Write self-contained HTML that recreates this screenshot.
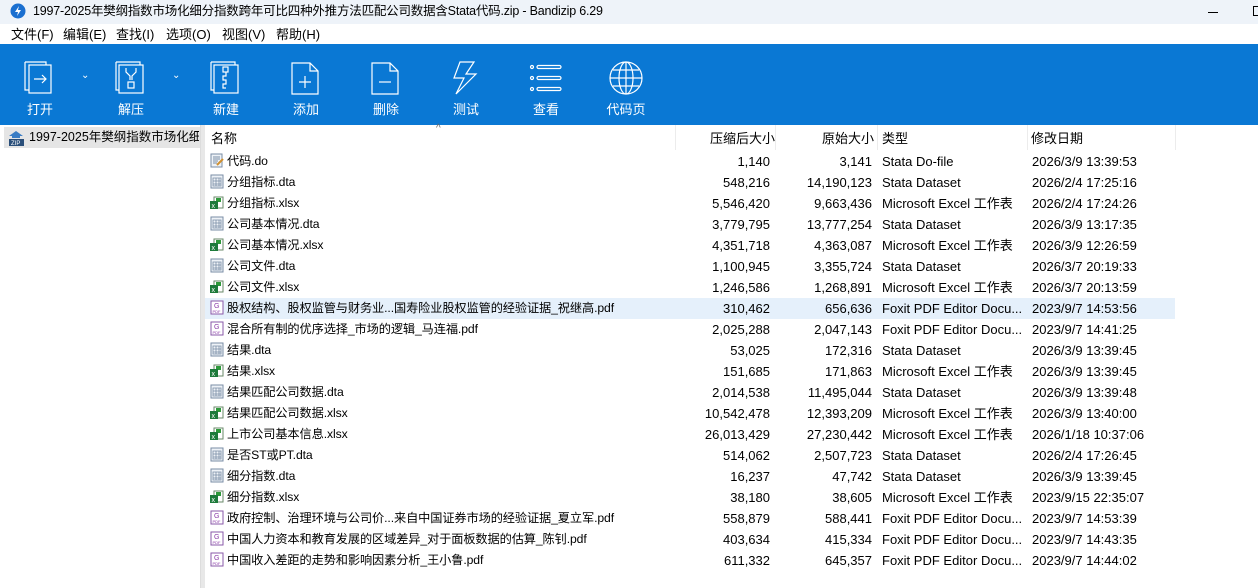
<!DOCTYPE html><html><head><meta charset="utf-8"><style>
*{margin:0;padding:0;box-sizing:border-box}
body{width:1258px;height:588px;overflow:hidden;background:#fff;font-family:"Liberation Sans","Noto Sans CJK SC",sans-serif;font-size:13px;line-height:15px;color:#000;position:relative}
.title{position:absolute;left:0;top:0;width:1258px;height:24px;background:#eef3f9;}
.title span{position:absolute;left:33px;top:4px;font-size:12.5px;letter-spacing:-0.2px}
.menu{position:absolute;top:24px;left:0;height:20px;width:1258px;background:#fff}
.menu span{position:absolute;top:3px;font-size:13px}
.tb{position:absolute;top:44px;left:0;width:1258px;height:81px;background:#0a78d4}
.btn{position:absolute;top:0;width:60px;text-align:center;color:#fff}
.btn svg{position:absolute;left:12px;top:16px}
.btn b{position:absolute;top:58px;left:0;width:60px;font-weight:normal;font-size:13px}
.left{position:absolute;left:0;top:125px;width:201px;height:463px;background:#fff;border-right:1px solid #ddd}
.split{position:absolute;left:201px;top:125px;width:4px;height:463px;background:#e8e8e8}
.hdr{position:absolute;top:125px;left:205px;width:1053px;height:25px}
.hdr span{position:absolute;top:6px}
.vd{position:absolute;top:125px;width:1px;height:25px;background:#ececec}
.row{position:absolute;left:205px;width:970px;height:21px}
.row span{position:absolute;top:4px;white-space:nowrap}
.row span.n{font-size:12.2px;letter-spacing:-0.1px}
.r{text-align:right}
.ic{position:absolute;left:5px;top:3px;width:14px;height:15px}
</style></head><body>
<div style="position:absolute;left:0;top:0;width:3px;height:44px;background:#e87a2a"></div>
<div class="title"><svg style="position:absolute;left:10px;top:3px" width="16" height="16"><circle cx="8" cy="8" r="7.5" fill="#1a6fd0"/><path d="M9 3L5 9h3l-1 4 4-6H8z" fill="#fff"/></svg><span>1997-2025年樊纲指数市场化细分指数跨年可比四种外推方法匹配公司数据含Stata代码.zip - Bandizip 6.29</span>
<div style="position:absolute;left:1208px;top:12px;width:10px;height:1px;background:#000"></div><div style="position:absolute;left:1253px;top:6px;width:10px;height:10px;border:1px solid #000"></div></div>
<div class="menu"><span style="left:11px">文件(F)</span><span style="left:63px">编辑(E)</span><span style="left:116px">查找(I)</span><span style="left:166px">选项(O)</span><span style="left:222px">视图(V)</span><span style="left:276px">帮助(H)</span></div>
<div class="tb">
<div class="btn" style="left:10px"><svg width="36" height="36" fill="none" stroke="#fff" stroke-width="1.2"><path d="M3 2h21v3M3 2v28h4"/><rect x="7" y="5" width="22" height="28"/><path d="M12 19h12M20 15l4 4-4 4"/></svg><b>打开</b></div>
<div style="position:absolute;left:81px;top:24px;color:#fff;font-size:10px">⌄</div>
<div class="btn" style="left:101px"><svg width="36" height="36" fill="none" stroke="#fff" stroke-width="1.2"><path d="M3 2h24v3"/><path d="M3 2v28h3"/><rect x="6" y="5" width="24" height="28"/><path d="M13 8v4l4 4v4M23 8v4l-4 4v4"/><rect x="15" y="22" width="6" height="6"/></svg><b>解压</b></div>
<div style="position:absolute;left:172px;top:24px;color:#fff;font-size:10px">⌄</div>
<div class="btn" style="left:196px"><svg width="36" height="36" fill="none" stroke="#fff" stroke-width="1.2"><path d="M3 2h24v3M3 2v28h3"/><rect x="6" y="5" width="24" height="28"/><rect x="15" y="7" width="5" height="5"/><path d="M18 12v4h-3v4h3v4h-3v4h3"/></svg><b>新建</b></div>
<div class="btn" style="left:276px"><svg width="36" height="36" fill="none" stroke="#fff" stroke-width="1.2"><path d="M4 3h18l8 8v23H4z M22 3v8h8"/><path d="M17 16v12M11 22h12"/></svg><b>添加</b></div>
<div class="btn" style="left:356px"><svg width="36" height="36" fill="none" stroke="#fff" stroke-width="1.2"><path d="M4 3h18l8 8v23H4z M22 3v8h8"/><path d="M11 22h12"/></svg><b>删除</b></div>
<div class="btn" style="left:436px"><svg width="36" height="36" fill="none" stroke="#fff" stroke-width="1.2"><path d="M12 2h14l-8 12h10L8 34l8-16H6z"/></svg><b>测试</b></div>
<div class="btn" style="left:516px"><svg width="36" height="36" fill="none" stroke="#fff" stroke-width="1.2"><circle cx="4" cy="7" r="1.5"/><circle cx="4" cy="18" r="1.5"/><circle cx="4" cy="29" r="1.5"/><rect x="9" y="5.5" width="24" height="3" rx="1.5"/><rect x="9" y="16.5" width="24" height="3" rx="1.5"/><rect x="9" y="27.5" width="24" height="3" rx="1.5"/></svg><b>查看</b></div>
<div class="btn" style="left:596px"><svg width="36" height="36" fill="none" stroke="#fff" stroke-width="1.2"><circle cx="18" cy="18" r="16"/><ellipse cx="18" cy="18" rx="7" ry="16"/><path d="M18 2v32M2 18h32M5 10h26M5 26h26"/></svg><b>代码页</b></div>
</div>
<div class="left"><div style="position:absolute;left:4px;top:2px;width:196px;height:21px;background:#e5e5e5"></div>
<svg style="position:absolute;left:8px;top:5px" width="16" height="16"><path d="M8 1L1 6h3v2h8V6h3z" fill="#3b7dc4"/><rect x="1" y="9" width="15" height="7" fill="#2a4f7a"/><text x="3" y="15" font-size="6" fill="#fff" font-family="Liberation Sans">ZIP</text></svg>
<span style="position:absolute;left:29px;top:5px;white-space:nowrap;width:170px;overflow:hidden;font-size:12.5px">1997-2025年樊纲指数市场化细</span></div>
<div class="split"></div>
<div class="hdr"><span style="left:6px">名称</span><span style="left:231px;top:-4px;font-size:10px;color:#666">^</span><span style="left:505px">压缩后大小</span><span style="left:617px">原始大小</span><span style="left:677px">类型</span><span style="left:826px">修改日期</span></div>
<div class="vd" style="left:675px"></div><div class="vd" style="left:775px"></div><div class="vd" style="left:877px"></div><div class="vd" style="left:1027px"></div><div class="vd" style="left:1175px"></div>
<div style="position:absolute;left:205px;top:298px;width:970px;height:21px;background:#e5f0fb"></div>
<div id="rows"></div>
<script>
var d=[["d","代码.do","1,140","3,141","Stata Do-file","2026/3/9 13:39:53"],
["t","分组指标.dta","548,216","14,190,123","Stata Dataset","2026/2/4 17:25:16"],
["x","分组指标.xlsx","5,546,420","9,663,436","Microsoft Excel 工作表","2026/2/4 17:24:26"],
["t","公司基本情况.dta","3,779,795","13,777,254","Stata Dataset","2026/3/9 13:17:35"],
["x","公司基本情况.xlsx","4,351,718","4,363,087","Microsoft Excel 工作表","2026/3/9 12:26:59"],
["t","公司文件.dta","1,100,945","3,355,724","Stata Dataset","2026/3/7 20:19:33"],
["x","公司文件.xlsx","1,246,586","1,268,891","Microsoft Excel 工作表","2026/3/7 20:13:59"],
["p","股权结构、股权监管与财务业...国寿险业股权监管的经验证据_祝继高.pdf","310,462","656,636","Foxit PDF Editor Docu...","2023/9/7 14:53:56"],
["p","混合所有制的优序选择_市场的逻辑_马连福.pdf","2,025,288","2,047,143","Foxit PDF Editor Docu...","2023/9/7 14:41:25"],
["t","结果.dta","53,025","172,316","Stata Dataset","2026/3/9 13:39:45"],
["x","结果.xlsx","151,685","171,863","Microsoft Excel 工作表","2026/3/9 13:39:45"],
["t","结果匹配公司数据.dta","2,014,538","11,495,044","Stata Dataset","2026/3/9 13:39:48"],
["x","结果匹配公司数据.xlsx","10,542,478","12,393,209","Microsoft Excel 工作表","2026/3/9 13:40:00"],
["x","上市公司基本信息.xlsx","26,013,429","27,230,442","Microsoft Excel 工作表","2026/1/18 10:37:06"],
["t","是否ST或PT.dta","514,062","2,507,723","Stata Dataset","2026/2/4 17:26:45"],
["t","细分指数.dta","16,237","47,742","Stata Dataset","2026/3/9 13:39:45"],
["x","细分指数.xlsx","38,180","38,605","Microsoft Excel 工作表","2023/9/15 22:35:07"],
["p","政府控制、治理环境与公司价...来自中国证券市场的经验证据_夏立军.pdf","558,879","588,441","Foxit PDF Editor Docu...","2023/9/7 14:53:39"],
["p","中国人力资本和教育发展的区域差异_对于面板数据的估算_陈钊.pdf","403,634","415,334","Foxit PDF Editor Docu...","2023/9/7 14:43:35"],
["p","中国收入差距的走势和影响因素分析_王小鲁.pdf","611,332","645,357","Foxit PDF Editor Docu...","2023/9/7 14:44:02"]];
var ic={d:'<svg class="ic" viewBox="0 0 14 15"><rect x="1" y="1" width="11" height="13" fill="#eef2f7" stroke="#7a8da6"/><path d="M3 4h7M3 6h7M3 8h5M3 10h4" stroke="#7a8da6"/><path d="M7 12l6-6" stroke="#d09030" stroke-width="2"/></svg>',
t:'<svg class="ic" viewBox="0 0 14 15"><rect x="1" y="1" width="12" height="13" fill="#eef2f7" stroke="#7a8da6"/><path d="M3 4h8v8H3zM3 7h8M3 10h8M6 4v8M9 4v8" fill="none" stroke="#7a8da6" stroke-width=".8"/></svg>',
x:'<svg class="ic" viewBox="0 0 14 15"><rect x="4" y="2" width="9" height="11" fill="#fff" stroke="#6a8a6a"/><rect x="6" y="3" width="5" height="4" fill="#2e9a3a"/><rect x="0" y="6" width="8" height="8" fill="#1d7a3a"/><text x="1.5" y="13" font-size="7" fill="#fff" font-family="Liberation Sans">x</text></svg>',
p:'<svg class="ic" viewBox="0 0 14 15"><rect x="1" y="1" width="12" height="13" fill="#fff" stroke="#8a5aa8"/><text x="4" y="8" font-size="7" fill="#8a3aa8" font-family="Liberation Sans">G</text><text x="2.5" y="13" font-size="4" fill="#8a3aa8" font-family="Liberation Sans">PDF</text></svg>'};
var h='';d.forEach(function(r,i){var t=150+i*21;h+='<div class="row" style="top:'+t+'px">'+ic[r[0]]+'<span class="n" style="left:22px">'+r[1]+'</span><span class="r" style="right:405px">'+r[2]+'</span><span class="r" style="right:303px">'+r[3]+'</span><span style="left:677px">'+r[4]+'</span><span style="left:827px">'+r[5]+'</span></div>'});
document.getElementById('rows').innerHTML=h;
</script>
</body></html>
